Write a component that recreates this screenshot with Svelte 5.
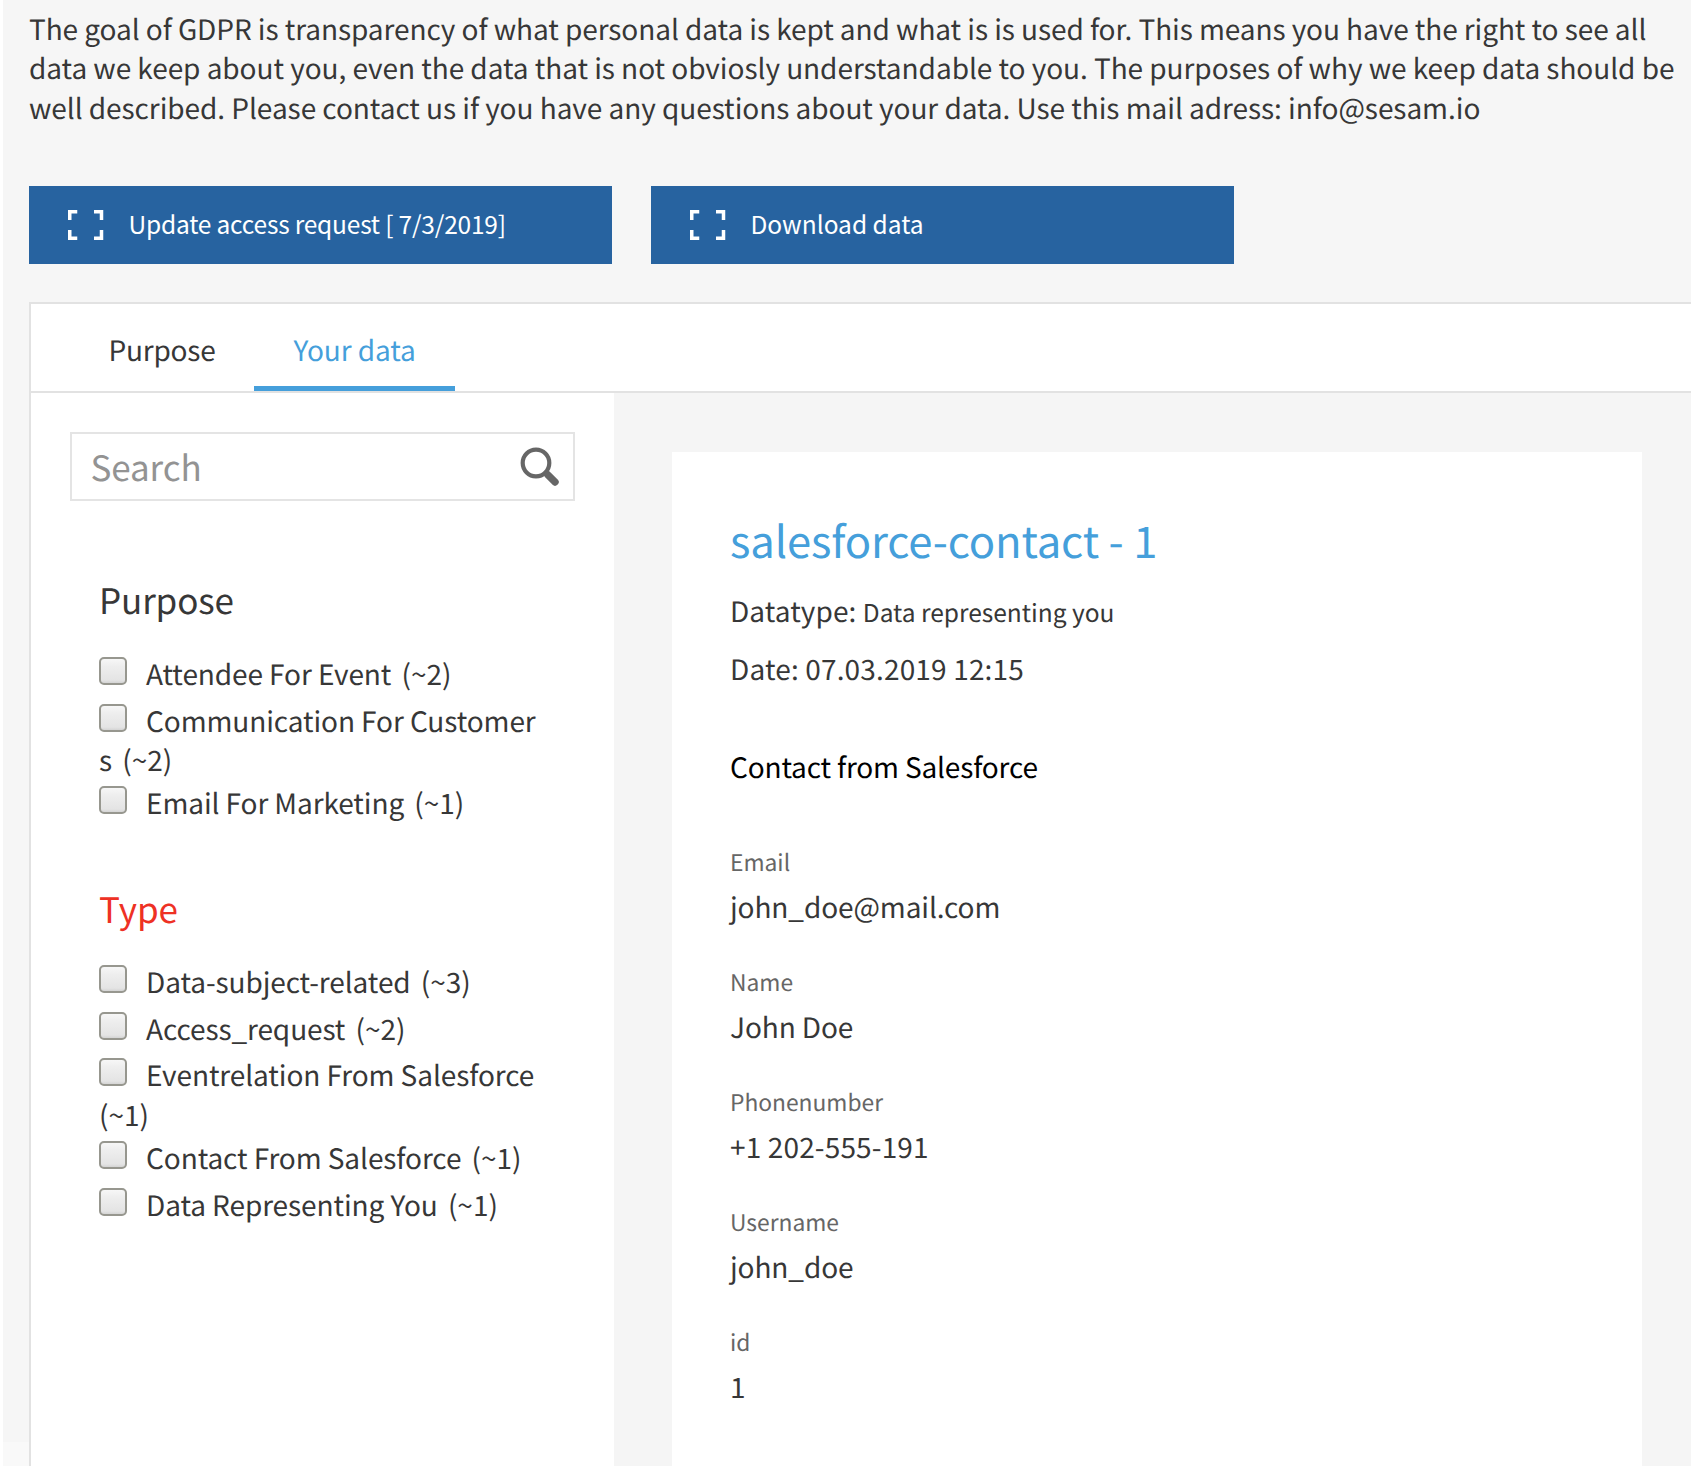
<script>
  const actions = ['Update access request [ 7/3/2019]', 'Download data'];

  const groups = [
    {
      title: 'Purpose',
      active: false,
      items: [
        ['Attendee For Event', 2],
        ['Communication For Customers', 2],
        ['Email For Marketing', 1]
      ]
    },
    {
      title: 'Type',
      active: true,
      items: [
        ['Data-subject-related', 3],
        ['Access_request', 2],
        ['Eventrelation From Salesforce', 1],
        ['Contact From Salesforce', 1],
        ['Data Representing You', 1]
      ]
    }
  ];

  const fields = [
    ['Email', 'john_doe@mail.com'],
    ['Name', 'John Doe'],
    ['Phonenumber', '+1 202-555-191'],
    ['Username', 'john_doe'],
    ['id', '1']
  ];
</script>

<div class="page">
  <p class="intro">
    <span class="tight">The goal of GDPR is transparency of what personal data is kept and what is is used for. This means you have the right to see all</span><br />
    data we keep about you, even the data that is not obviosly understandable to you. The purposes of why we keep data should be<br />
    well described. Please contact us if you have any questions about your data. Use this mail adress: info@sesam.io
  </p>

  <div class="actions">
    {#each actions as action}
      <button class="action">
        <svg class="corners" viewBox="0 0 36 30" aria-hidden="true">
          <path d="M1.75 10V1.75H9.25M26 1.75H33.5V10M33.5 20V28.25H26M9.25 28.25H1.75V20" />
        </svg>
        <span>{action}</span>
      </button>
    {/each}
  </div>

  <section class="panel">
    <nav class="tabs">
      <span class="tab">Purpose</span>
      <span class="tab current">Your data</span>
    </nav>

    <div class="columns">
      <aside class="filters">
        <div class="search">
          <span>Search</span>
          <svg class="lens" viewBox="0 0 40 40" aria-hidden="true">
            <circle cx="16" cy="16" r="13.3" />
            <path class="neck" d="M24 24.5L29 29.5" />
            <path class="handle" d="M28 28L35 35" />
          </svg>
        </div>

        {#each groups as group}
          <div class="group">
            <h3 class:active={group.active}>{group.title}</h3>
            {#each group.items as [name, count]}
              <label class="option"><i class="box"></i><span class="name">{name}</span> <span class="count">(~{count})</span></label>
            {/each}
          </div>
        {/each}
      </aside>

      <main class="content">
        <article class="card">
          <h2>salesforce-contact - 1</h2>
          <p class="meta">Datatype: <small>Data representing you</small></p>
          <p class="meta date">Date: 07.03.2019 12:15</p>
          <h4>Contact from Salesforce</h4>
          <dl>
            {#each fields as [label, value]}
              <div class="field">
                <dt>{label}</dt>
                <dd class:numeric={label === 'Phonenumber'}>{value}</dd>
              </div>
            {/each}
          </dl>
        </article>
      </main>
    </div>
  </section>
</div>

<style>
  :global(body) {
    margin: 0;
    background: #fff;
  }

  .page {
    box-sizing: border-box;
    width: 1688px;
    height: 1466px;
    margin-left: 3px;
    padding: 10px 0 0 26px;
    display: flex;
    flex-direction: column;
    overflow: hidden;
    background: linear-gradient(#f6f6f6 1442px, #f9f9f9 1442px);
    color: #373737;
    font-family: 'Noto Sans CJK SC', 'Noto Sans', sans-serif;
    font-size: 28px;
    line-height: 39.3px;
    text-rendering: geometricPrecision;
  }

  p,
  h2,
  h3,
  h4,
  dl,
  dd {
    margin: 0;
    font-weight: 400;
  }

  .intro {
    white-space: nowrap;
    letter-spacing: -0.05px;
  }

  .tight {
    letter-spacing: -0.073px;
  }

  .actions {
    display: flex;
    gap: 39px;
    margin-top: 58px;
  }

  .action {
    box-sizing: border-box;
    width: 583px;
    height: 78px;
    padding: 0 0 3px 39px;
    border: 0;
    display: flex;
    align-items: center;
    gap: 24.5px;
    background: #2763a0;
    color: #fff;
    font: inherit;
    font-size: 24.5px;
  }

  .action:first-child {
    letter-spacing: -0.2px;
  }

  .corners {
    width: 36px;
    height: 30px;
    margin-top: 3px;
    fill: none;
    stroke: #fff;
    stroke-width: 3.5;
  }

  .panel {
    flex: 1;
    min-height: 0;
    margin-top: 38px;
    display: flex;
    flex-direction: column;
    border-top: 2px solid #e2e2e2;
    border-left: 2px solid #e2e2e2;
    background: #fff;
  }

  .tabs {
    display: flex;
    height: 87px;
    flex: none;
    padding-left: 38.5px;
    border-bottom: 2px solid #e2e2e2;
  }

  .tab {
    padding: 27px 39px 0;
    letter-spacing: -0.23px;
  }

  .current {
    letter-spacing: -0.08px;
    color: #459fdb;
    border-bottom: 5px solid #459fdb;
  }

  .columns {
    flex: 1;
    min-height: 0;
    display: flex;
  }

  .filters {
    box-sizing: border-box;
    width: 583px;
    flex: none;
    padding: 39px 39px 0;
  }

  .search {
    box-sizing: border-box;
    width: 505px;
    height: 69.5px;
    padding: 0 13.5px 0 18.5px;
    border: 2px solid #e4e4e4;
    display: flex;
    align-items: center;
    justify-content: space-between;
    color: #939393;
    font-size: 35px;
    letter-spacing: -0.1px;
    margin-bottom: 78.8px;
  }

  .lens {
    width: 40px;
    height: 40px;
    margin-top: 1px;
    fill: none;
    stroke: #666;
    stroke-width: 4.2;
  }

  .lens .handle {
    stroke-width: 7.4;
    stroke-linecap: round;
  }

  .group {
    padding: 0 35px 0 29px;
    margin-bottom: 57.4px;
  }

  h3 {
    margin-bottom: 35px;
    font-size: 35px;
    line-height: 40px;
    letter-spacing: -0.12px;
  }

  .active {
    margin-bottom: 34.3px;
    letter-spacing: 0;
    color: #ee3124;
  }

  .option {
    display: block;
    min-height: 42.7px;
    padding-bottom: 4px;
    letter-spacing: -0.09px;
    word-break: break-all;
  }

  .box {
    box-sizing: border-box;
    display: inline-block;
    width: 28px;
    height: 28px;
    margin-right: 19px;
    border: 2px solid #97978f;
    border-radius: 5px;
    background: linear-gradient(#f7f7f7, #eee 30%, #e4e4e4 88%, #d4d4d4);
  }

  .name {
    margin-right: 4px;
  }

  .count {
    letter-spacing: 0;
    white-space: nowrap;
  }

  .content {
    flex: 1;
    padding: 59px 49px 0 58px;
    background: #f5f5f5;
  }

  .card {
    box-sizing: border-box;
    height: 100%;
    padding: 62.5px 58px 0;
    background: #fff;
  }

  h2 {
    margin-bottom: 27.6px;
    color: #459fdb;
    font-size: 43.6px;
    line-height: 50px;
    letter-spacing: -0.15px;
  }

  .meta {
    height: 39.3px;
    margin-bottom: 18.8px;
    letter-spacing: 0.09px;
  }

  .date {
    letter-spacing: 0.16px;
  }

  small {
    font-size: 24.5px;
    letter-spacing: 0;
  }

  h4 {
    margin: 58.7px 0 57.5px;
    color: #000;
    font-size: 28px;
    letter-spacing: -0.17px;
  }

  dl {
    display: flex;
    flex-direction: column;
    gap: 37.5px;
  }

  dt {
    margin-bottom: 9.2px;
    color: #666;
    font-size: 22.8px;
    line-height: 34px;
  }

  dd {
    letter-spacing: -0.1px;
  }

  .numeric {
    letter-spacing: 0.15px;
  }
</style>
